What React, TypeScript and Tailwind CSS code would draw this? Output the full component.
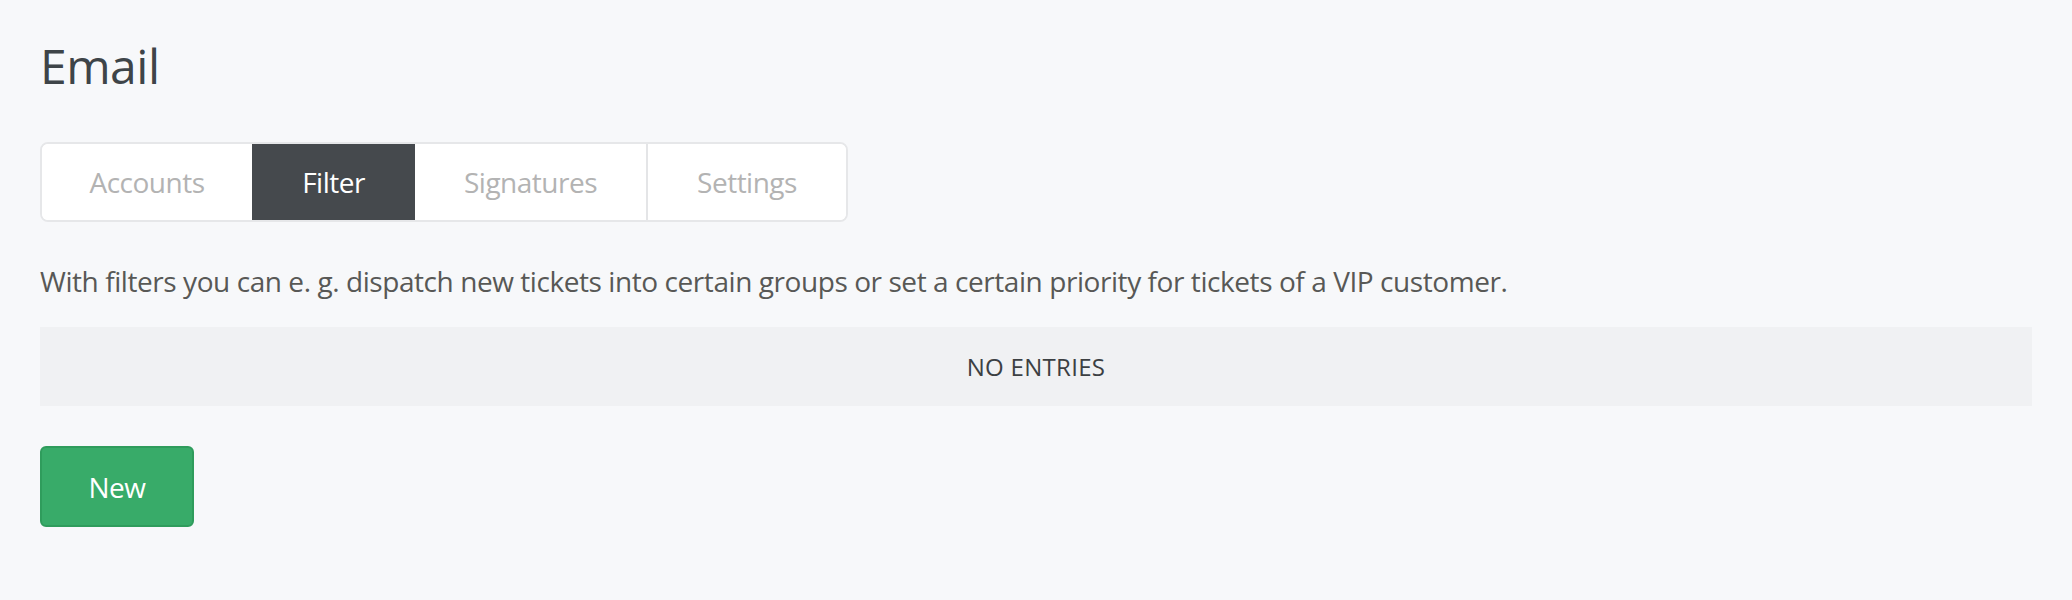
import React, { useState } from 'react';

const tabs = [
  { label: 'Accounts', width: 'w-[210px]' },
  { label: 'Filter', width: 'w-[163px]' },
  { label: 'Signatures', width: 'w-[233px]' },
  { label: 'Settings', width: 'w-[198px]' },
];

export default function App() {
  const [active, setActive] = useState('Filter');

  return (
    <div className="min-h-[600px] w-full bg-[#f7f8fa] px-10 pt-[38px] font-['Open_Sans',sans-serif]">
      <h1 className="text-[48px] leading-[56px] font-normal tracking-[-0.5px] text-[#3e4448]">Email</h1>

      {/* Tabs */}
      <div className="mt-[48px] flex w-fit overflow-hidden rounded-[8px] border-2 border-[#e6e7e9] bg-white">
        {tabs.map((tab, i) => {
          const isActive = tab.label === active;
          const nextActive = tabs[i + 1]?.label === active;
          const showDivider = i < tabs.length - 1 && !isActive && !nextActive;
          return (
            <button
              key={tab.label}
              type="button"
              onClick={() => setActive(tab.label)}
              className={`${tab.width} h-[76px] text-[28px] leading-[40px] tracking-[-0.5px] ${
                isActive ? 'bg-[#45494d] text-white' : 'bg-white text-[#b3b3b3]'
              } ${showDivider ? 'border-r-2 border-[#e4e5e7]' : ''}`}
            >
              {tab.label}
            </button>
          );
        })}
      </div>

      <p className="mt-[39px] text-[28px] leading-[40px] tracking-[-0.43px] text-[#585856]">
        With filters you can e. g. dispatch new tickets into certain groups or set a certain priority for tickets of a VIP customer.
      </p>

      {/* Empty table */}
      <div className="mt-[26px] flex h-[79px] items-center justify-center bg-[#f0f1f3]">
        <span className="text-[24px] uppercase tracking-[0.3px] text-[#3c4043]">No Entries</span>
      </div>

      <button
        type="button"
        className="mt-[40px] h-[81px] w-[154px] rounded-[6px] border-2 border-[#2f9c5c] bg-[#38ab69] text-[28px] tracking-[-0.5px] text-white"
      >
        New
      </button>
    </div>
  );
}
